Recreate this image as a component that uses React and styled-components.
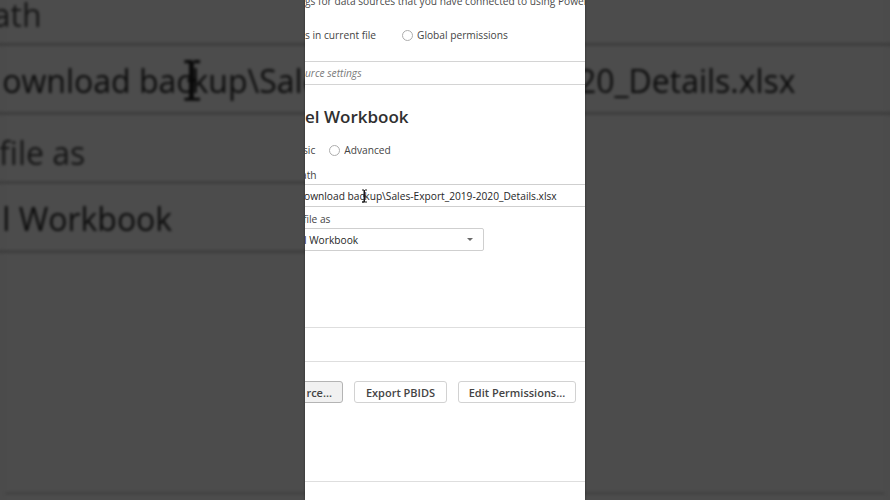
import React from "react";
import styled, { createGlobalStyle } from "styled-components";

const GlobalStyle = createGlobalStyle`
  html, body {
    margin: 0;
    padding: 0;
    background: #4b4b4b;
  }
  * {
    box-sizing: border-box;
  }
`;

const Stage = styled.div`
  position: relative;
  width: 890px;
  height: 500px;
  overflow: hidden;
  display: flex;
  justify-content: center;
  background: #4b4b4b;
  font-family: "Open Sans", "Noto Sans", sans-serif;
`;

// blown-up, darkened copy of the dialog behind the phone-shaped frame
const Backdrop = styled.div`
  position: absolute;
  top: 0;
  left: 305px;
  width: 280px;
  height: 500px;
  background: #fff;
  transform: scale(3.14);
  transform-origin: 140px 250px;
  filter: brightness(0.3) blur(0.5px);
  pointer-events: none;
`;

const Panel = styled.div`
  position: relative;
  z-index: 1;
  width: 280px;
  height: 500px;
  background: #fff;
  overflow: hidden;
  box-shadow: 0 0 2px rgba(0, 0, 0, 0.45);
`;

const Content = styled.div`
  display: flex;
  flex-direction: column;
  width: 100%;
`;

const Intro = styled.div`
  margin-top: -6px;
  font-size: 10.2px;
  line-height: 14px;
  color: #4a4a4a;
  white-space: nowrap;
`;

const RadioRow = styled.div`
  display: flex;
  align-items: center;
  height: 16px;
  margin-top: ${(p) => p.$top}px;
  margin-left: ${(p) => p.$shift || 0}px;
  font-size: 10.2px;
  color: #444;
  white-space: nowrap;
`;

const RadioLabel = styled.span`
  margin-right: ${(p) => p.$gap || 0}px;
`;

const RadioDot = styled.span`
  width: 11px;
  height: 11px;
  border: 1px solid #adadad;
  border-radius: 50%;
  margin-right: 4px;
  flex-shrink: 0;
`;

const SearchBox = styled.div`
  margin-top: 18px;
  margin-left: -2px;
  width: 300px;
  height: 24px;
  padding-left: 1px;
  border: 1px solid #d4d4d4;
  display: flex;
  align-items: center;
  font-size: 10.2px;
  font-style: italic;
  color: #7a7a7a;
  white-space: nowrap;
`;

const Title = styled.div`
  margin-top: 20px;
  font-size: 17px;
  line-height: 24px;
  font-weight: 600;
  color: #303030;
  white-space: nowrap;
`;

const Label = styled.div`
  margin-top: ${(p) => p.$top}px;
  margin-left: ${(p) => p.$shift || 0}px;
  font-size: 10.2px;
  line-height: 14px;
  color: #444;
  white-space: nowrap;
`;

const Field = styled.div`
  position: relative;
  margin-top: 2px;
  margin-left: -4px;
  width: ${(p) => p.$width}px;
  height: 23px;
  padding: 0 10px 0 2px;
  border: 1px solid #cfcfcf;
  border-radius: 2px;
  display: flex;
  align-items: center;
  justify-content: space-between;
  font-size: 10.2px;
  color: #262626;
  white-space: nowrap;
`;

const Caret = styled.span`
  width: 0;
  height: 0;
  border-left: 3px solid transparent;
  border-right: 3px solid transparent;
  border-top: 3px solid #6a6a6a;
`;

const Cursor = styled.svg`
  position: absolute;
  left: ${(p) => p.$x}px;
  top: 4px;
`;

const Divider = styled.div`
  margin-top: ${(p) => p.$top}px;
  height: 1px;
  background: #dedede;
`;

const ButtonRow = styled.div`
  display: flex;
  gap: 11px;
  margin-top: 19px;
`;

const Button = styled.div`
  height: 22px;
  padding: 0 ${(p) => (p.$cut ? 10 : 0)}px 0 0;
  width: ${(p) => p.$width}px;
  margin-left: ${(p) => (p.$cut ? -4 : 0)}px;
  border: 1px solid ${(p) => (p.$cut ? "#b4b4b4" : "#d2d2d2")};
  border-radius: 3px;
  background: ${(p) => (p.$cut ? "#f1f1f1" : "#fff")};
  display: flex;
  align-items: center;
  justify-content: ${(p) => (p.$cut ? "flex-end" : "center")};
  font-size: 11px;
  font-weight: 600;
  color: #444;
  white-space: nowrap;
`;

const Sheet = () => (
  <Content>
    <Intro>gs for data sources that you have connected to using Power BI Desktop.</Intro>
    <RadioRow $top={19}>
      <RadioLabel $gap={26}>s in current file</RadioLabel>
      <RadioDot />
      <RadioLabel>Global permissions</RadioLabel>
    </RadioRow>
    <SearchBox>urce settings</SearchBox>
    <Title>el Workbook</Title>
    <RadioRow $top={13} $shift={-2}>
      <RadioLabel $gap={14}>sic</RadioLabel>
      <RadioDot />
      <RadioLabel>Advanced</RadioLabel>
    </RadioRow>
    <Label $top={10} $shift={-4}>ath</Label>
    <Field $width={300}>
      ownload backup\Sales-Export_2019-2020_Details.xlsx
      <Cursor $x={59} width="7" height="14" viewBox="0 0 7 14">
        <path d="M1 1h2v12H1M4 1h2M3.5 1v12M1 13h5M2 7h3" stroke="#1a1a1a" strokeWidth="1" fill="none" />
      </Cursor>
    </Field>
    <Label $top={5} $shift={-2}>file as</Label>
    <Field $width={183}>
      l Workbook
      <Caret />
    </Field>
    <Divider $top={76} />
    <Divider $top={33} />
    <ButtonRow>
      <Button $cut $width={42}>rce...</Button>
      <Button $width={93}>Export PBIDS</Button>
      <Button $width={118}>Edit Permissions...</Button>
    </ButtonRow>
    <Divider $top={78} />
  </Content>
);

export default function App() {
  return (
    <>
      <GlobalStyle />
      <Stage>
        <Backdrop>
          <Sheet />
        </Backdrop>
        <Panel>
          <Sheet />
        </Panel>
      </Stage>
    </>
  );
}
